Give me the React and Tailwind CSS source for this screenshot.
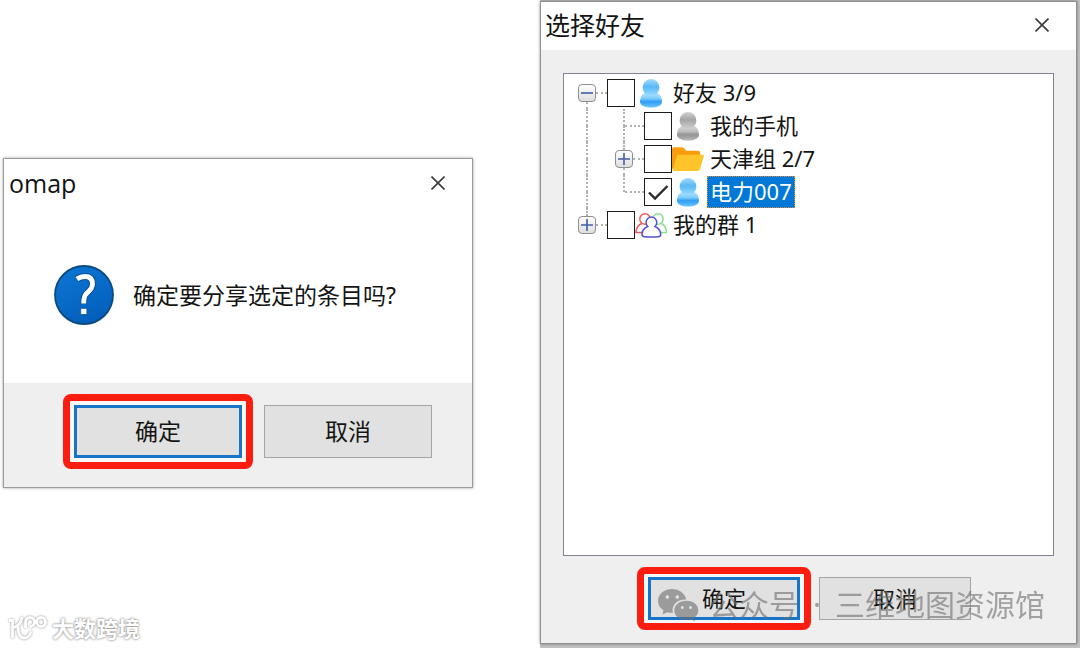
import { useState } from 'react'

const FONT = "font-['Noto_Sans','Noto_Sans_CJK_SC',sans-serif]"

function CloseIcon() {
  return (
    <svg viewBox="0 0 14 14" className="h-3.5 w-3.5" fill="none" stroke="#3a3a3a" strokeWidth="1.6" aria-hidden>
      <path d="M0.5 0.5 13.5 13.5M13.5 0.5 0.5 13.5" />
    </svg>
  )
}

function QuestionIcon() {
  const hook = 'M23 14Q26.500 11.500 31 11.500Q38.500 11.500 38.500 19Q38.500 23 34.500 26.500L32.500 28.500Q29.700 31.200 29.700 38.500'
  return (
    <svg viewBox="0 0 60 60" className="h-[60px] w-[60px] shrink-0" fill="none" aria-hidden>
      <defs>
        <linearGradient id="question" x1="0" y1="0" x2="0.5" y2="1">
          <stop offset="0" stopColor="#0c78d4" />
          <stop offset="1" stopColor="#0460bd" />
        </linearGradient>
      </defs>
      <circle cx="30" cy="30" r="29" fill="url(#question)" stroke="#0b4a80" strokeWidth="1.8" />
      <path d={hook} stroke="#0b4f95" strokeWidth="6.800" />
      <path d={hook} stroke="#fff" strokeWidth="4.800" />
      <path d="M26.700 43.300h6.200v6.200h-6.200z" fill="#fff" stroke="#0b4f95" strokeWidth="0.800" />
    </svg>
  )
}

function PersonIcon({ color }) {
  const blue = color === 'blue'
  const id = `person-${color}`
  return (
    <svg viewBox="0 0 32 32" className="h-8 w-8" aria-hidden>
      <defs>
        <linearGradient id={`${id}-head`} x1="0" y1="0" x2="0" y2="1">
          <stop offset="0" stopColor={blue ? '#a5dcfb' : '#d0d0d0'} />
          <stop offset="0.450" stopColor={blue ? '#58b9f7' : '#a5a5a5'} />
          <stop offset="1" stopColor={blue ? '#9adcff' : '#cfcfcf'} />
        </linearGradient>
        <linearGradient id={`${id}-body`} x1="0" y1="0" x2="0" y2="1">
          <stop offset="0" stopColor={blue ? '#b9e6ff' : '#dadada'} />
          <stop offset="0.400" stopColor={blue ? '#7ccbfc' : '#bcbcbc'} />
          <stop offset="0.620" stopColor={blue ? '#2f9df5' : '#939393'} />
          <stop offset="1" stopColor={blue ? '#6cc6fb' : '#bababa'} />
        </linearGradient>
      </defs>
      <path
        d="M10.500 15.500C6.500 17.500 5 21 5 24.500C5 28.500 10 30.500 16 30.500S27 28.500 27 24.500C27 21 25.500 17.500 21.500 15.500Z"
        fill={`url(#${id}-body)`}
      />
      <circle cx="16" cy="10.500" r="8.400" fill={`url(#${id}-head)`} />
    </svg>
  )
}

function FolderIcon() {
  return (
    <svg viewBox="0 0 33 28" className="h-7 w-[33px]" aria-hidden>
      <path d="M0 4Q0 2 2 2H11L15 5.500H27Q29 5.500 29 7.500V24H0Z" fill="#f99d0c" />
      <path
        d="M7 9.500H31.500Q33.300 9.500 32.800 11.200L28.800 24.500Q28.300 26.300 26.300 26.300H1.500Q0.500 26.300 0.800 25L5 11Q5.500 9.500 7 9.500Z"
        fill="#fdc42c"
      />
    </svg>
  )
}

function GroupIcon() {
  return (
    <svg viewBox="0 0 32 28" className="h-7 w-8" fill="#fff" strokeWidth="1.500" aria-hidden>
      <g stroke="#ee5757">
        <path d="M7.500 12C4 13.500 1 16 1 21.500H14" />
        <circle cx="10" cy="8" r="5.200" />
      </g>
      <g stroke="#86e28c">
        <path d="M25.500 12C29 13.500 31.500 16 31.500 21.500H20" />
        <circle cx="23" cy="8" r="5.200" />
      </g>
      <path
        d="M12.700 15.500C9 17 7 19.500 7 23.500Q7 25.500 9.500 25.700Q16.500 26.500 23.500 25.700Q25.700 25.500 25.700 23.500C25.700 19.500 23.500 17 20 15.500Q21.800 13.800 21.800 11.500A5.400 5.400 0 0 0 11 11.500Q11 13.800 12.700 15.500Z"
        stroke="#5151e0"
      />
    </svg>
  )
}

function WechatIcon() {
  return (
    <svg viewBox="0 0 42 35" className="h-[35px] w-[42px] shrink-0" aria-hidden>
      <path
        fillRule="evenodd"
        fill="#6e6e6e"
        d="M15 1C7 1 1 6.300 1 13C1 17 3.200 20.300 6.500 22.300L5.500 26.500L10.500 24.300Q13 25 16 24.800C13.500 17 21 10.800 29.300 11.500C28 5.500 22 1 15 1ZM10.300 7.300a1.800 1.800 0 1 1 0 3.600a1.800 1.800 0 1 1 0-3.600ZM20.300 7.300a1.800 1.800 0 1 1 0 3.600a1.800 1.800 0 1 1 0-3.600Z"
      />
      <path
        fillRule="evenodd"
        fill="#6e6e6e"
        d="M29.500 12.800C22.500 12.800 17.300 17 17.300 22.500S22.500 32 29.500 32Q32 32 34.200 31.300L38 33.500L37.200 29.800C40 28 41.300 25.300 41.300 22.500C41.300 17 36.500 12.800 29.500 12.800ZM25.300 18a1.500 1.500 0 1 1 0 3a1.500 1.500 0 1 1 0-3ZM33.500 18a1.500 1.500 0 1 1 0 3a1.500 1.500 0 1 1 0-3Z"
      />
    </svg>
  )
}

function DialogButton({ primary, className, children }) {
  return (
    <button
      type="button"
      className={`shrink-0 bg-[#e1e1e1] text-[#141414] ${primary ? 'border-[3px] border-[#1874c9]' : 'border border-[#a5a5a5]'} ${className}`}
    >
      {children}
    </button>
  )
}

function ConfirmDialog() {
  return (
    <section
      role="dialog"
      aria-label="omap"
      className="border border-[#9c9c9c] bg-white shadow-[0_0_3px_rgba(0,0,0,0.35)]"
    >
      <header className="flex h-12 items-center justify-between pl-[5px] pr-[27px]">
        <h1 className="font-['Open_Sans',sans-serif] text-[25px] leading-8 text-[#141414]">omap</h1>
        <button type="button" aria-label="关闭">
          <CloseIcon />
        </button>
      </header>
      <div className="flex h-44 items-center gap-[19px] pl-[50px]">
        <QuestionIcon />
        <p className="text-[23px] leading-8 text-[#141414]">确定要分享选定的条目吗?</p>
      </div>
      <footer className="flex items-center gap-[11px] bg-[#efefef] pb-[18px] pl-[59px] pt-[11px]">
        <div className="shrink-0 rounded-lg border-[7px] border-[#fc1d10] bg-[#f8f8f8] p-1">
          <DialogButton primary className="h-[53px] w-[168px] text-[23px]">
            确定
          </DialogButton>
        </div>
        <DialogButton className="h-[53px] w-[168px] text-[23px]">取消</DialogButton>
      </footer>
    </section>
  )
}

// one vertical slot of the tree: line above, optional toggle, line below
function Guide({ up, down, toggle, open, onToggle, name }) {
  return (
    <span className="flex w-[18px] shrink-0 flex-col items-center self-stretch">
      <span className={`flex-1 border-l-2 border-dotted ${up ? 'border-[#b0b0b0]' : 'border-transparent'}`} />
      {toggle && (
        <button
          type="button"
          aria-label={name}
          aria-expanded={open}
          onClick={onToggle}
          className="flex h-[18px] w-[18px] items-center justify-center rounded-sm border border-[#8f8f8f] bg-linear-to-b from-white to-[#dedede]"
        >
          <svg viewBox="0 0 14 14" className="h-3.5 w-3.5 shrink-0" stroke="#3f5ea8" strokeWidth="1.600" aria-hidden>
            <path d={open ? 'M1 7H13' : 'M1 7H13M7 1V13'} />
          </svg>
        </button>
      )}
      <span className={`flex-1 border-l-2 border-dotted ${down ? 'border-[#b0b0b0]' : 'border-transparent'}`} />
    </span>
  )
}

function TreeRow({ id, label, icon, checked, onCheck, selected, child, last, toggle, open, onToggle }) {
  return (
    <li className="flex h-[33px] items-center">
      {child && (
        <>
          <Guide up down />
          <span className="w-[19px] shrink-0" />
        </>
      )}
      <Guide up={child || last} down={!last} toggle={toggle} open={open} onToggle={onToggle} name={label} />
      <span
        className={`shrink-0 border-t-2 border-dotted border-[#b0b0b0] ${toggle ? 'w-[11px]' : '-ml-2 w-[19px]'}`}
      />
      <span className="grid h-7 w-7 shrink-0">
        <input
          id={id}
          type="checkbox"
          checked={checked}
          onChange={onCheck}
          className="h-7 w-7 appearance-none border border-[#1c1c1c] bg-white [grid-area:1/1]"
        />
        {checked && (
          <svg
            viewBox="0 0 28 28"
            className="pointer-events-none h-7 w-7 [grid-area:1/1]"
            fill="none"
            stroke="#2b2b2b"
            strokeWidth="2.400"
            aria-hidden
          >
            <path d="M5 14.500 11 20.500 23.500 8" />
          </svg>
        )}
      </span>
      <span className="flex w-8 shrink-0 items-center">{icon}</span>
      <label
        htmlFor={id}
        className={`ml-[3px] whitespace-nowrap border px-0.5 pb-0.5 text-[22px] leading-7 ${
          selected ? 'border-dotted border-[#e08a3c] bg-[#0078d7] text-white' : 'border-transparent text-[#141414]'
        }`}
      >
        {label}
      </label>
    </li>
  )
}

function FriendTree() {
  const [checks, setChecks] = useState({ member: true })
  const [friendsOpen, setFriendsOpen] = useState(true)

  const bind = (id) => ({
    id,
    checked: Boolean(checks[id]),
    onCheck: () => setChecks((prev) => ({ ...prev, [id]: !prev[id] })),
  })

  return (
    <ul className="flex-1 border border-[#80848e] bg-white pl-3.5 pt-0.5">
      <TreeRow
        {...bind('friends')}
        label="好友 3/9"
        icon={<PersonIcon color="blue" />}
        toggle
        open={friendsOpen}
        onToggle={() => setFriendsOpen(!friendsOpen)}
      />
      {friendsOpen && (
        <>
          <TreeRow {...bind('phone')} child label="我的手机" icon={<PersonIcon color="gray" />} />
          <TreeRow {...bind('tianjin')} child toggle label="天津组 2/7" icon={<FolderIcon />} />
          <TreeRow {...bind('member')} child last selected label="电力007" icon={<PersonIcon color="blue" />} />
        </>
      )}
      <TreeRow {...bind('groups')} last toggle label="我的群 1" icon={<GroupIcon />} />
    </ul>
  )
}

function FriendDialog() {
  return (
    <section
      role="dialog"
      aria-label="选择好友"
      className="relative flex min-w-0 flex-1 flex-col border border-[#8f8f8f] bg-[#efefef] shadow-[0_0_3px_rgba(0,0,0,0.4)]"
    >
      <header className="flex h-12 items-center justify-between bg-white pb-0.5 pl-1 pr-[27px]">
        <h2 className="text-[25px] leading-8 text-[#141414]">选择好友</h2>
        <button type="button" aria-label="关闭">
          <CloseIcon />
        </button>
      </header>
      <div className="flex flex-1 flex-col px-[22px] pt-[23px]">
        <FriendTree />
      </div>
      <footer className="flex items-center gap-2 pb-[13px] pl-24 pt-[11px]">
        <div className="shrink-0 rounded-lg border-[7px] border-[#fc1d10] bg-[#f4f8fa] px-1 py-[3px]">
          <DialogButton primary className="h-[43px] w-[152px] text-[22px]">
            确定
          </DialogButton>
        </div>
        <DialogButton className="h-[43px] w-[152px] text-[22px]">取消</DialogButton>
      </footer>
      <div className="pointer-events-none absolute bottom-5 right-[31px] flex items-center whitespace-nowrap text-[30px] leading-9 text-[#6e6e6e] opacity-60">
        <WechatIcon />
        <span className="ml-2.5">公众号</span>
        <span className="mx-3.5">·</span>
        <span>三维地图资源馆</span>
      </div>
    </section>
  )
}

function SiteMark() {
  return (
    <div className="absolute bottom-1.5 left-2 flex items-center gap-1 text-white">
      <svg
        viewBox="0 0 40 28"
        className="h-7 w-10 drop-shadow-[0_0_1px_#888]"
        fill="none"
        stroke="currentColor"
        strokeWidth="2.800"
        aria-hidden
      >
        <path d="M1 6.500H4.500V24M14 3Q13 12 5 13.500M10 12.500C10 20 12 24 16.500 24Q21.500 24 23 17.500" />
        <path d="M17.500 14V8a4.500 4.500 0 1 1 4.500 4.500" />
        <circle cx="33" cy="8" r="4.500" />
        <path d="M26 6.500Q27.500 8 28.500 9.500" />
      </svg>
      <span className="text-[22px] font-bold leading-7 [text-shadow:0_0_2px_#888,0_0_3px_#aaa]">大数跨境</span>
    </div>
  )
}

export default function App() {
  return (
    <main className={`relative grid min-h-screen grid-cols-2 bg-white ${FONT}`}>
      <div className="flex flex-col justify-center pb-0.5 pl-[3px] pr-[67px]">
        <ConfirmDialog />
      </div>
      <div className="flex bg-[#c2c2c2] pb-1 pr-[3px] pt-px">
        <FriendDialog />
      </div>
      <SiteMark />
    </main>
  )
}
